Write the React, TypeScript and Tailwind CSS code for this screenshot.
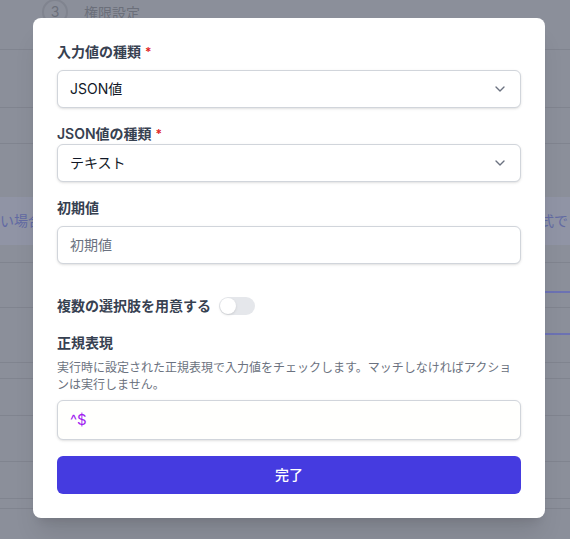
import { ChevronDown } from "lucide-react";

const font = { fontFamily: 'Inter, "Noto Sans CJK JP", sans-serif' };

function Label({ text, required }: { text: string; required?: boolean }) {
  return (
    <div className="flex h-5 items-center text-sm font-semibold leading-5 text-[#374151]">
      {text}
      {required && <span className="ml-1 text-xs text-[#e02424]">*</span>}
    </div>
  );
}

function SelectBox({ value }: { value: string }) {
  return (
    <div className="relative flex h-[38px] items-center rounded-md border border-[#d1d5db] bg-white px-3 text-sm text-[#111827] shadow-sm">
      {value}
      <ChevronDown className="absolute right-3 h-4 w-4 text-[#6b7280]" strokeWidth={2} />
    </div>
  );
}

export default function App() {
  return (
    <div className="relative h-[539px] w-[570px] overflow-hidden bg-[#8b8f9a]" style={font}>
      {/* page behind the dialog */}
      <div className="flex flex-col">
        <div className="flex h-[50px] items-start gap-4 border-b border-[#80848f] pl-[42px]">
          <div className="-mt-px flex h-[26px] w-[26px] items-center justify-center rounded-full border-2 border-[#80848f] text-sm text-[#6b6f7a]">
            3
          </div>
          <span className="mt-[3px] text-sm text-[#6b6f7a]">権限設定</span>
        </div>
        <div className="h-[58px] border-b border-[#80848f]" />
        <div className="h-[36px] border-b border-[#80848f]" />
        <div className="h-[53px]" />
        <div className="flex h-[48px] items-center justify-between bg-[#9094a5] text-sm text-[#626aa3]">
          <span>い場合</span>
          <span className="mr-[2px]">式で</span>
        </div>
        <div className="h-[18px] border-b border-[#80848f]" />
        <div className="flex h-[30px] justify-end">
          <div className="w-[25px] border-b-2 border-[#6c72b3]" />
        </div>
        <div className="flex h-[15px] border-b border-[#80848f]" />
        <div className="flex h-[27px] justify-end">
          <div className="w-[25px] border-b-2 border-[#6c72b3]" />
        </div>
        <div className="h-[28px] border-b border-[#80848f]" />
        <div className="h-[16px] border-b border-[#80848f]" />
        <div className="h-[37px] border-b border-[#80848f]" />
        <div className="h-[46px] border-b border-[#80848f]" />
        <div className="h-[37px] border-b border-[#80848f]" />
        <div className="h-[10px] border-b border-[#80848f]" />
      </div>

      {/* dialog */}
      <div className="absolute left-[33px] top-[18px] w-[512px] rounded-lg bg-white p-6 shadow-xl">
        <Label text="入力値の種類" required />
        <div className="mt-2">
          <SelectBox value="JSON値" />
        </div>

        <div className="mt-4">
          <Label text="JSON値の種類" required />
        </div>
        <SelectBox value="テキスト" />

        <div className="mt-4">
          <Label text="初期値" />
        </div>
        <div className="mt-2 flex h-[38px] items-center rounded-md border border-[#d1d5db] bg-white px-3 text-sm text-[#6b7280] shadow-sm">
          初期値
        </div>

        <div className="mt-8 flex h-5 items-center gap-2">
          <span className="text-sm font-semibold text-[#374151]">複数の選択肢を用意する</span>
          <div className="flex h-[18px] w-9 items-center rounded-full bg-[#e5e7eb] px-px">
            <div className="h-4 w-4 rounded-full bg-white shadow" />
          </div>
        </div>

        <div className="mt-[17px]">
          <Label text="正規表現" />
        </div>
        <p className="mt-1.5 text-xs leading-[17px] text-[#6b7280]">
          実行時に設定された正規表現で入力値をチェックします。マッチしなければアクションは実行しません。
        </p>
        <div className="mt-[7px] flex h-10 items-center rounded-md border border-[#d1d5db] bg-[#fffffd] px-3 text-[15px] text-[#a11ff0] shadow-sm">
          ^$
        </div>

        <button className="mt-4 flex h-[38px] w-full items-center justify-center rounded-md bg-[#453be0] text-sm font-medium text-white">
          完了
        </button>
      </div>
    </div>
  );
}
